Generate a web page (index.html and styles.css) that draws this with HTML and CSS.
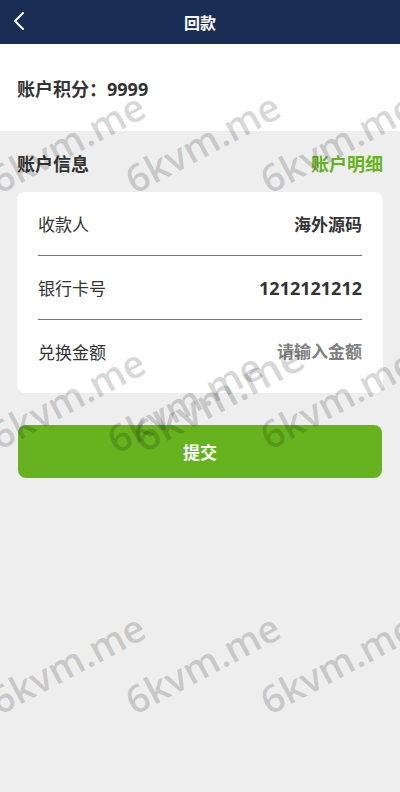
FILE: index.html
```html
<!DOCTYPE html>
<html lang="zh-CN">
<head>
  <meta charset="UTF-8">
  <meta name="viewport" content="width=device-width, initial-scale=1.0">
  <title>回款</title>
  <link rel="stylesheet" href="styles.css">
</head>
<body>

  <header class="topbar">
    <a class="back" href="#">
      <svg width="12" height="20" viewBox="0 0 12 20"><path d="M10 2 L2 10 L10 18" fill="none" stroke="#fff" stroke-width="2" stroke-linecap="round" stroke-linejoin="round"/></svg>
    </a>
    <h1 class="title">回款</h1>
  </header>

  <section class="points">账户积分：9999</section>

  <main class="content">
    <div class="section-head">
      <span class="section-title">账户信息</span>
      <a class="detail-link" href="#">账户明细</a>
    </div>

    <div class="card">
      <div class="row">
        <span class="label">收款人</span>
        <span class="value">海外源码</span>
      </div>
      <div class="row">
        <span class="label">银行卡号</span>
        <span class="value num">1212121212</span>
      </div>
      <div class="row">
        <span class="label">兑换金额</span>
        <input class="amount" type="text" placeholder="请输入金额">
      </div>
    </div>

    <button class="submit" type="button">提交</button>
  </main>

  <div class="watermarks">
    <span class="wm r1 c1">6kvm.me</span>
    <span class="wm r1 c2">6kvm.me</span>
    <span class="wm r1 c3">6kvm.me</span>
    <span class="wm r2 c1">6kvm.me</span>
    <span class="wm r2 mid">6kvm.me</span>
    <span class="wm extra">6kvm.me</span>
    <span class="wm r2 c3">6kvm.me</span>
    <span class="wm r3 c1">6kvm.me</span>
    <span class="wm r3 c2">6kvm.me</span>
    <span class="wm r3 c3">6kvm.me</span>
  </div>

</body>
</html>
```

FILE: styles.css
```css
* {
  box-sizing: border-box;
}
body {
  margin: 0;
  min-height: 792px;
  background-color: #eeeeee;
  color: #333;
  font-family: 'Open Sans', 'Noto Sans CJK SC', sans-serif;
  position: relative;
  overflow: hidden;
}
.topbar {
  height: 44px;
  background-color: #1a2d54;
  display: flex;
  align-items: center;
  justify-content: center;
  position: relative;
}
.back {
  position: absolute;
  left: 13px;
  top: 11px;
  display: flex;
}
.title {
  margin: 0;
  color: #fff;
  font-size: 16px;
  font-weight: bold;
}
.points {
  height: 87px;
  padding: 0 17px;
  background-color: #fff;
  display: flex;
  align-items: center;
  font-size: 18px;
  font-weight: bold;
}
.content {
  padding: 0 17px;
}
.section-head {
  height: 61px;
  padding-top: 3px;
  display: flex;
  align-items: center;
  justify-content: space-between;
  font-size: 18px;
  font-weight: bold;
}
.detail-link {
  color: #67b21f;
  text-decoration: none;
}
.card {
  background-color: #fff;
  border-radius: 8px;
  padding: 0 21px 10px;
}
.row {
  height: 64px;
  display: flex;
  align-items: center;
  justify-content: space-between;
  border-bottom: 1px solid #777;
}
.row:last-child {
  height: 63px;
  border-bottom: none;
}
.label {
  font-size: 17px;
}
.value {
  font-size: 17px;
  font-weight: bold;
}
.value.num {
  font-size: 18px;
}
.amount {
  width: 160px;
  border: none;
  outline: none;
  padding: 0;
  text-align: right;
  font-family: inherit;
  font-size: 17px;
  font-weight: bold;
  color: #333;
}
.amount::placeholder {
  color: #808080;
}
.submit {
  display: block;
  width: 364px;
  height: 53px;
  margin: 32px 1px 0;
  border: none;
  border-radius: 8px;
  background-color: #67b21f;
  color: #fff;
  font-family: inherit;
  font-size: 17px;
  font-weight: bold;
}
.watermarks {
  position: absolute;
  inset: 0;
  pointer-events: none;
  overflow: hidden;
}
.wm {
  position: absolute;
  transform: translate(-50%, -50%) rotate(-28deg);
  font-family: 'Open Sans', sans-serif;
  font-size: 38px;
  font-weight: 600;
  color: rgba(0, 0, 0, 0.17);
  white-space: nowrap;
  line-height: 1;
}
.r1 { top: 142px; }
.r2 { top: 398px; }
.r3 { top: 663px; }
.c1 { left: 67px; }
.c2 { left: 202px; }
.c3 { left: 337px; }
.mid {
  left: 184px;
  top: 402px;
}
.extra {
  left: 218px;
  top: 396px;
  font-size: 42px;
}
```
